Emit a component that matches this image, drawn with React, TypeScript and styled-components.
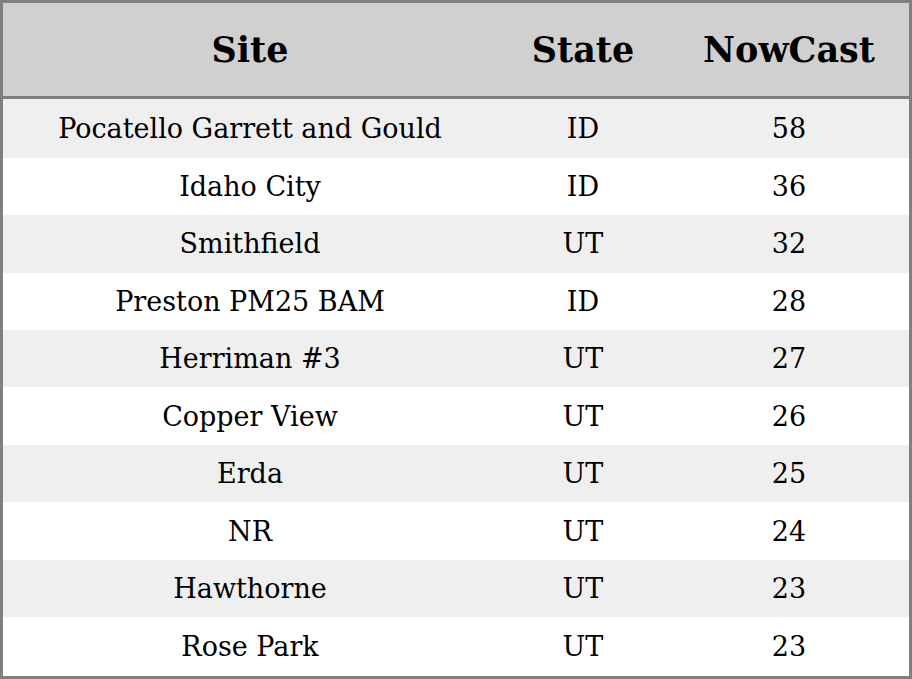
import styled, { createGlobalStyle } from "styled-components";

const GlobalStyle = createGlobalStyle`
  html, body {
    margin: 0;
    padding: 0;
    background: #fff;
  }
  body {
    font-family: "DejaVu Serif", serif;
  }
`;

const Table = styled.table`
  width: 912px;
  height: 679px;
  border-collapse: collapse;
  border: 3px solid #808080;
  box-sizing: border-box;
  color: #000;
  font-family: "DejaVu Serif", serif;
`;

const HeadRow = styled.tr`
  height: 96px;
  background: #d0d0d0;
  border-bottom: 3px solid #808080;
`;

const HeadCell = styled.th<{ $w: number }>`
  width: ${(p) => p.$w}px;
  font-size: 35px;
  font-weight: bold;
  text-align: center;
  padding: 0;
`;

const Row = styled.tr<{ $shade: boolean }>`
  background: ${(p) => (p.$shade ? "#efefef" : "#ffffff")};
`;

const Cell = styled.td`
  font-size: 27px;
  text-align: center;
  padding: 0;
`;

const rows = [
  ["Pocatello Garrett and Gould", "ID", 58],
  ["Idaho City", "ID", 36],
  ["Smithfield", "UT", 32],
  ["Preston PM25 BAM", "ID", 28],
  ["Herriman #3", "UT", 27],
  ["Copper View", "UT", 26],
  ["Erda", "UT", 25],
  ["NR", "UT", 24],
  ["Hawthorne", "UT", 23],
  ["Rose Park", "UT", 23],
] as const;

function App() {
  return (
    <>
      <GlobalStyle />
      <Table>
        <thead>
          <HeadRow>
            <HeadCell $w={494}>Site</HeadCell>
            <HeadCell $w={172}>State</HeadCell>
            <HeadCell $w={240}>NowCast</HeadCell>
          </HeadRow>
        </thead>
        <tbody>
          {rows.map(([site, state, value], i) => (
            <Row key={site} $shade={i % 2 === 0}>
              <Cell>{site}</Cell>
              <Cell>{state}</Cell>
              <Cell>{value}</Cell>
            </Row>
          ))}
        </tbody>
      </Table>
    </>
  );
}

export default App;
